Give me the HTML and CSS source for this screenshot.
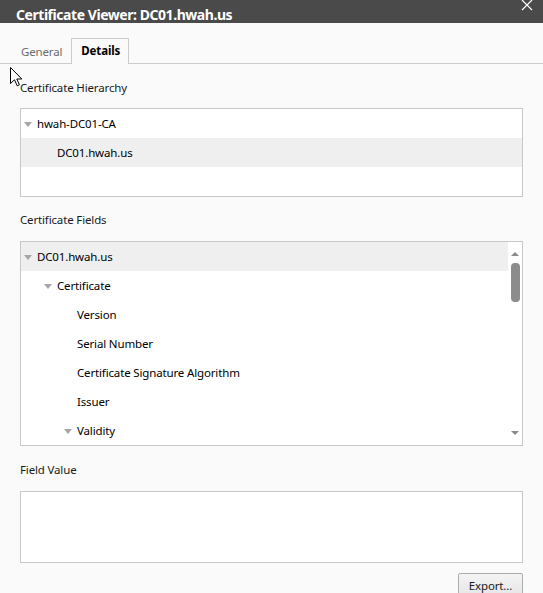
FILE: index.html
```html
<!DOCTYPE html>
<html>
<head>
<meta charset="utf-8">
<link rel="stylesheet" href="styles.css">
</head>
<body>
<div class="window">
  <div class="titlebar">
    <span class="title">Certificate Viewer: DC01.hwah.us</span>
    <svg class="close" width="12" height="12" viewBox="0 0 12 12"><path d="M1 0 L11 10 M11 0 L1 10" stroke="#ffffff" stroke-width="1.2" fill="none"/></svg>
  </div>
  <div class="tabs">
    <div class="tab">General</div>
    <div class="tab active">Details</div>
  </div>
  <div class="content">
    <div class="label">Certificate Hierarchy</div>
    <div class="box hier">
      <div class="row lvl0"><span class="tri"></span>hwah-DC01-CA</div>
      <div class="row lvl1 sel"><span class="notri"></span>DC01.hwah.us</div>
    </div>
    <div class="label l2">Certificate Fields</div>
    <div class="box fields">
      <div class="rows">
        <div class="row lvl0 sel"><span class="tri"></span>DC01.hwah.us</div>
        <div class="row lvl1"><span class="tri"></span>Certificate</div>
        <div class="row lvl2"><span class="notri"></span>Version</div>
        <div class="row lvl2"><span class="notri"></span>Serial Number</div>
        <div class="row lvl2"><span class="notri"></span>Certificate Signature Algorithm</div>
        <div class="row lvl2"><span class="notri"></span>Issuer</div>
        <div class="row lvl1b"><span class="tri"></span>Validity</div>
      </div>
      <div class="scrollbar">
        <span class="arrow up"></span>
        <span class="thumb"></span>
        <span class="arrow down"></span>
      </div>
    </div>
    <div class="label l3">Field Value</div>
    <div class="box value"></div>
    <div class="actions">
      <button class="btn">Export...</button>
    </div>
  </div>
  <svg class="cursor" width="13" height="20" viewBox="0 0 13 20"><path d="M0.5 0.5 L0.5 16.5 L4.5 12.8 L7.2 18.8 L9.4 17.8 L6.8 12 L11.8 12 Z" fill="#ffffff" stroke="#000000" stroke-width="1"/></svg>
</div>
</body>
</html>
```

FILE: styles.css
```css
html, body {
  margin: 0;
  padding: 0;
  background: #fafafa;
}
body {
  font-family: "Noto Sans", "Open Sans", sans-serif;
  font-size: 11.5px;
  letter-spacing: -0.15px;
  color: #000;
}
.window {
  position: relative;
  width: 543px;
  height: 593px;
  overflow: hidden;
  background: #fafafa;
}
.titlebar {
  height: 23px;
  background: #4a4a4a;
  display: flex;
  justify-content: space-between;
  align-items: flex-start;
  padding-left: 16px;
  padding-right: 10px;
}
.title {
  color: #ffffff;
  font-weight: bold;
  font-size: 14px;
  line-height: 14px;
  padding-top: 8px;
  letter-spacing: -0.45px;
}
.close {
  margin-top: 0;
}
.tabs {
  height: 41px;
  box-sizing: border-box;
  border-bottom: 1px solid #cccccc;
  display: flex;
  align-items: flex-end;
  padding-left: 12px;
}
.tab {
  height: 25px;
  box-sizing: border-box;
  padding: 0 8px 0 8px;
  line-height: 24px;
  color: #6d6d6d;
  margin-bottom: -1px;
  border: 1px solid transparent;
  border-bottom: none;
}
.tab.active {
  color: #000;
  font-weight: bold;
  border-color: #cccccc;
  background: #fafafa;
  height: 26px;
  padding: 0 8px 0 9px;
}
.content {
  padding: 14px 20px 0 20px;
}
.label {
  line-height: 20px;
  height: 20px;
  color: #1a1a1a;
  margin-bottom: 10px;
}
.label.l2 {
  margin-top: 13px;
  margin-bottom: 11px;
}
.label.l3 {
  margin-top: 14px;
  margin-bottom: 11px;
}
.box {
  border: 1px solid #c8c8c8;
  background: #ffffff;
  box-sizing: border-box;
  width: 503px;
}
.hier {
  height: 89px;
}
.fields {
  height: 205px;
  display: flex;
}
.rows {
  flex: 1;
}
.value {
  height: 72px;
}
.row {
  height: 29px;
  display: flex;
  align-items: center;
  white-space: nowrap;
}
.row.sel {
  background: #efefef;
}
.lvl0 { padding-left: 3px; }
.lvl1 { padding-left: 23px; }
.lvl1b { padding-left: 43px; }
.lvl2 { padding-left: 43px; }
.tri {
  display: inline-block;
  width: 0;
  height: 0;
  border-left: 4px solid transparent;
  border-right: 4px solid transparent;
  border-top: 5px solid #a6a6a6;
  margin-right: 5px;
  margin-top: 1px;
}
.notri {
  display: inline-block;
  width: 13px;
}
.scrollbar {
  width: 14px;
  display: flex;
  flex-direction: column;
  align-items: center;
  background: #ffffff;
}
.arrow {
  display: block;
  width: 0;
  height: 0;
  border-left: 4px solid transparent;
  border-right: 4px solid transparent;
}
.arrow.up {
  border-bottom: 4px solid #8a8a8a;
  margin-top: 10px;
}
.thumb {
  display: block;
  width: 9px;
  height: 39px;
  border-radius: 4px;
  background: #8c8c8c;
  margin-top: 7px;
  margin-left: 1px;
}
.arrow.down {
  border-top: 4px solid #8a8a8a;
  margin-top: auto;
  margin-bottom: 10px;
}
.actions {
  display: flex;
  justify-content: flex-end;
  margin-top: 10px;
}
.btn {
  font-family: "Noto Sans", "Open Sans", sans-serif;
  font-size: 11.5px;
  letter-spacing: -0.15px;
  width: 65px;
  height: 24px;
  border: 1px solid #adadad;
  background: linear-gradient(#f4f4f4, #e6e6e6);
  color: #1a1a1a;
  padding: 0;
  border-radius: 2px;
}
.cursor {
  position: absolute;
  left: 10px;
  top: 67px;
}
```
